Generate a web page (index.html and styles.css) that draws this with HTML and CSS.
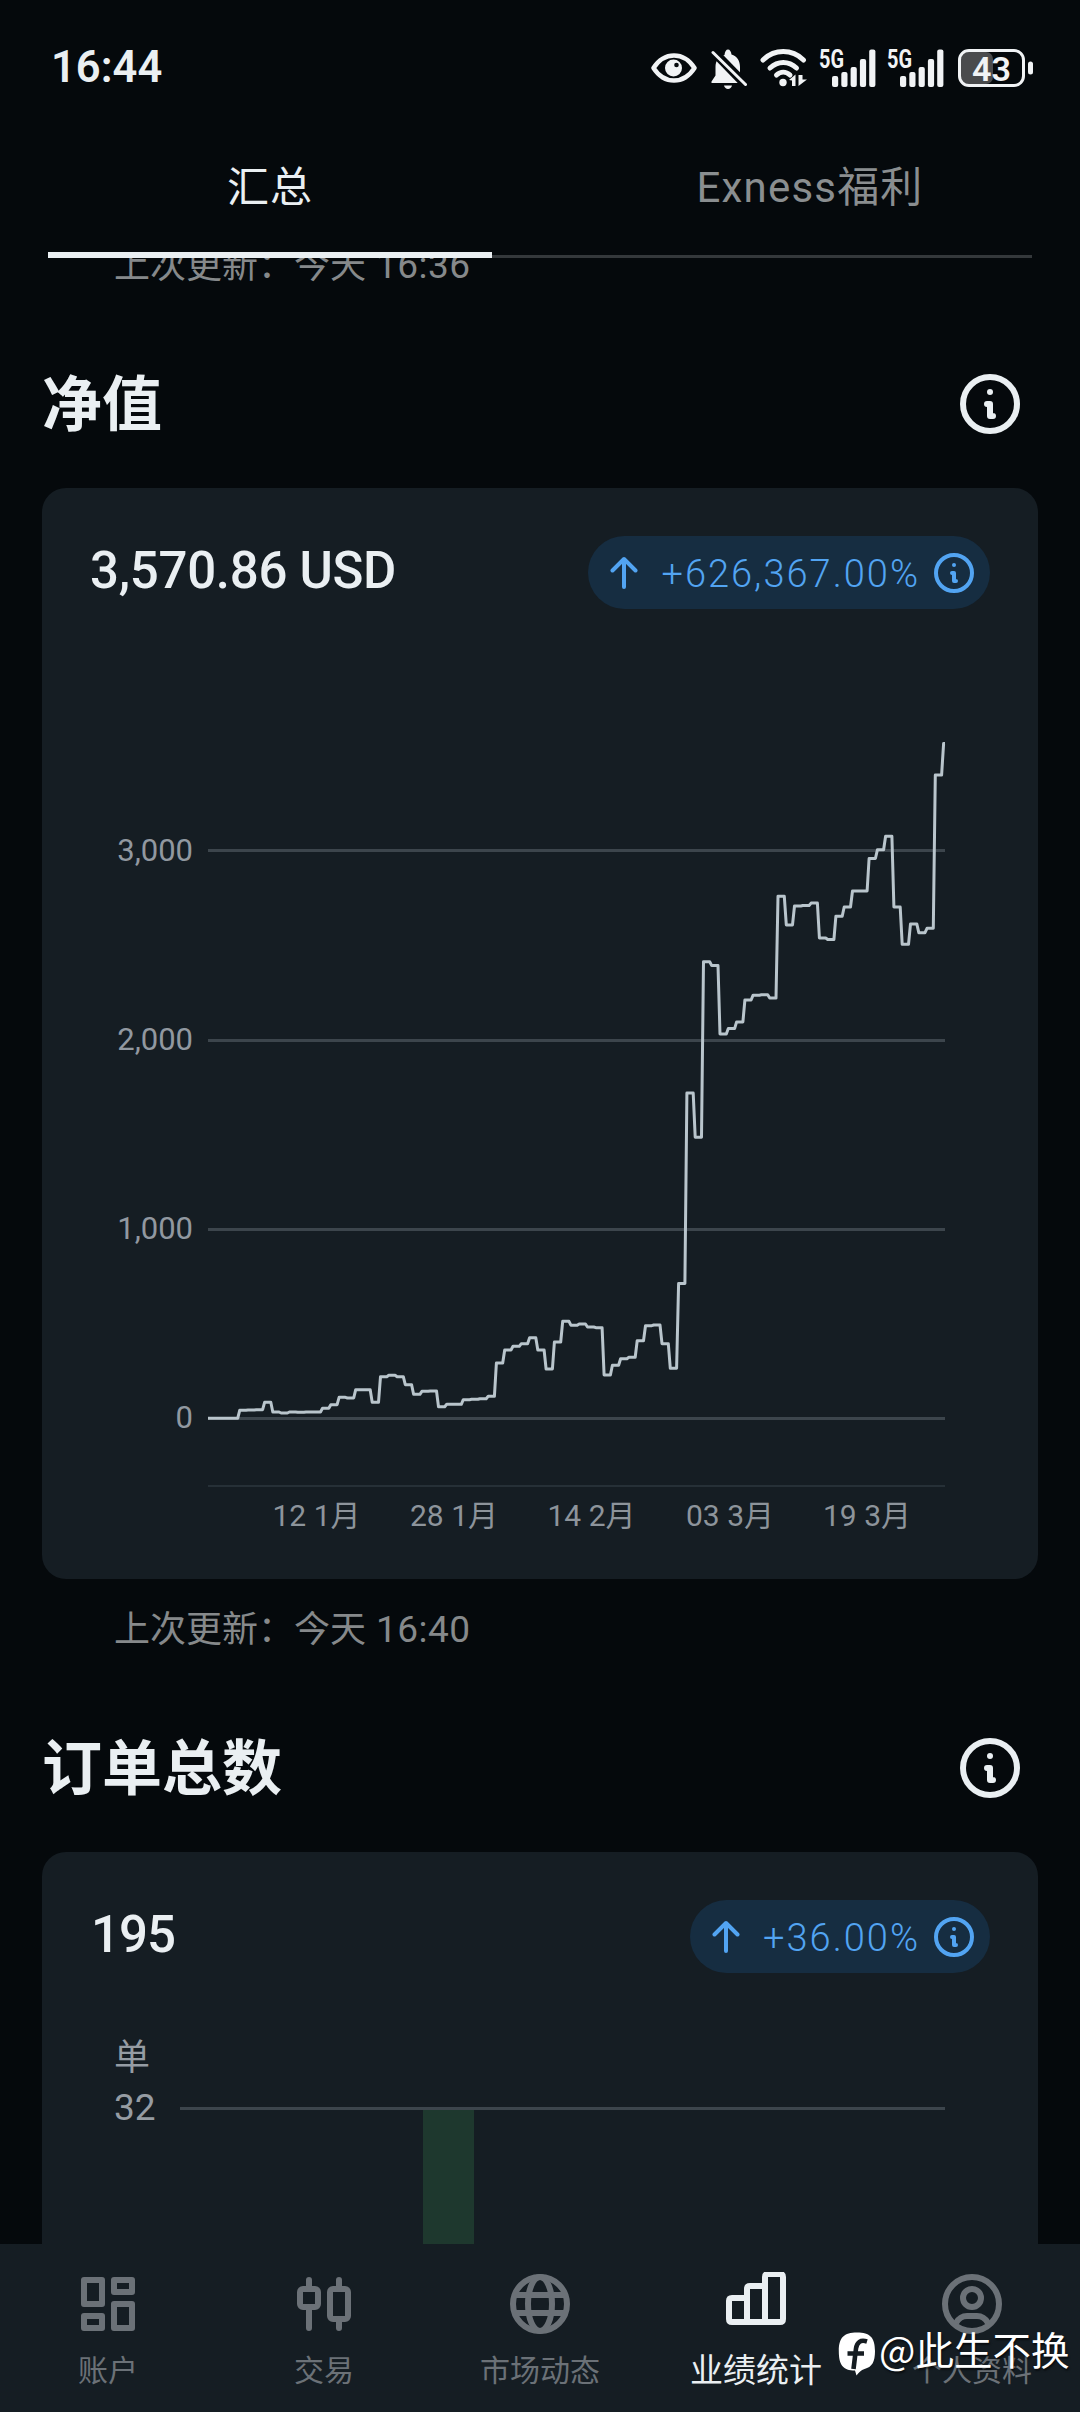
FILE: index.html
```html
<!DOCTYPE html>
<html lang="zh-CN">
<head>
<meta charset="utf-8">
<title>业绩统计</title>
<link rel="stylesheet" href="styles.css">
</head>
<body>
<svg class="defs" width="0" height="0">
  <symbol id="info" viewBox="0 0 60 60">
    <circle cx="30" cy="30" r="27" fill="none" stroke="currentColor" stroke-width="6"/>
    <circle cx="30" cy="18" r="3" fill="currentColor"/>
    <path d="M27 30h3v12h3" fill="none" stroke="currentColor" stroke-width="6" stroke-linecap="round" stroke-linejoin="round"/>
  </symbol>
  <symbol id="arrow" viewBox="0 0 28 34">
    <path d="M14 31V3M2.500 14.500L14 3l11.500 11.500" fill="none" stroke="currentColor" stroke-width="4" stroke-linecap="round" stroke-linejoin="round"/>
  </symbol>
  <symbol id="bars" viewBox="0 0 57 38">
    <g fill="currentColor">
      <rect x="13" y="27" width="6.200" height="11" rx="2"/>
      <rect x="22.300" y="23" width="6.200" height="15" rx="2"/>
      <rect x="31.600" y="18" width="6.200" height="20" rx="2"/>
      <rect x="40.900" y="10" width="6.200" height="28" rx="2"/>
      <rect x="50.200" y="0.500" width="6.200" height="37.500" rx="2"/>
    </g>
  </symbol>
</svg>

<header class="header">
  <div class="status">
    <span class="time">16:44</span>
    <div class="status-icons">
      <svg class="eye" width="46" height="30" viewBox="0 0 46 30">
        <path d="M2.500 15C8 6.500 15 2.500 23 2.500S38 6.500 43.500 15C38 23.500 31 27.500 23 27.500S8 23.500 2.500 15z" fill="none" stroke="currentColor" stroke-width="4.500" stroke-linejoin="round"/>
        <circle cx="22.500" cy="15" r="8.500" fill="currentColor"/><circle cx="25.500" cy="12" r="2.300" fill="#05090c"/>
      </svg>
      <svg class="bell" width="36" height="41" viewBox="0 0 36 41">
        <path d="M0.500 34v-1.500l4-6V18c0-6.500 3.500-10.500 9-12C13.800 2.500 15.200 0.500 17 0.500s3.200 2 3.500 5c5.500 1.500 8.500 6.500 8.500 12.500v8L32 32.500V34z" fill="currentColor"/>
        <path d="M13 36.500h8c-.6 2.300-2 3.500-4 3.500s-3.400-1.200-4-3.500z" fill="currentColor"/>
        <path d="M0 0l36 37" stroke="#05090c" stroke-width="9"/>
        <path d="M2 3.500l32.500 32" stroke="currentColor" stroke-width="3" stroke-linecap="round"/>
      </svg>
      <svg class="wifi" width="48" height="38" viewBox="0 0 48 38">
        <g fill="none" stroke="currentColor" stroke-width="5" stroke-linecap="round">
          <path d="M3 11C14.500-.2 32-.2 43.500 11"/><path d="M10 19c8-7.500 18.500-7.500 26.500 0"/><path d="M16.500 26c4-3.800 9.500-3.800 13.500 0"/>
        </g>
        <circle cx="23" cy="33.500" r="3.700" fill="currentColor"/>
        <path d="M29 31l6.500-5.500V37h-3.500v-5.500zM38.500 26v11l8.500-6.500h-4.500v-4.500z" fill="currentColor"/>
      </svg>
      <svg class="signal" width="57" height="38"><use href="#bars"/><text x="0" y="19" textLength="25" lengthAdjust="spacingAndGlyphs" class="net">5G</text></svg>
      <svg class="signal" width="57" height="38"><use href="#bars"/><text x="0" y="19" textLength="25" lengthAdjust="spacingAndGlyphs" class="net">5G</text></svg>
      <svg class="battery" width="76" height="38" viewBox="0 0 76 38">
        <rect x="3" y="3" width="32" height="32" rx="7" fill="#4a4b4d"/>
        <rect x="1.500" y="1.500" width="64" height="35" rx="9.500" fill="none" stroke="currentColor" stroke-width="3"/>
        <rect x="70" y="12.500" width="5" height="13" rx="2.500" fill="currentColor"/>
        <text x="14" y="31.500" textLength="39" lengthAdjust="spacingAndGlyphs" class="charge">43</text>
      </svg>
    </div>
  </div>
  <nav class="tabs">
    <a class="tab tab-active">汇总</a>
    <a class="tab">Exness福利</a>
  </nav>
</header>

<main class="content">
  <p class="updated updated-first">上次更新：今天 <span class="clock">16:36</span></p>

  <section class="block">
    <div class="heading"><h2>净值</h2><svg class="info-lg"><use href="#info"/></svg></div>
    <div class="card card-equity">
      <div class="summary">
        <strong class="value">3,570.86 USD</strong>
        <span class="pill"><svg class="arrow"><use href="#arrow"/></svg><span class="pct">+626,367.00%</span><svg class="info-sm"><use href="#info"/></svg></span>
      </div>
      <svg class="chart" width="996" height="879" viewBox="42 700 996 879">
        <g class="grid">
          <path d="M208 850.500H945M208 1040.500H945M208 1229.500H945M208 1418.500H945"/>
          <path class="axis" d="M208 1486H945"/>
        </g>
        <g class="ylabel">
          <text x="193" y="861">3,000</text><text x="193" y="1050">2,000</text>
          <text x="193" y="1239">1,000</text><text x="193" y="1428">0</text>
        </g>
        <g class="xlabel">
          <text x="316.500" y="1526">12 1月</text><text x="454" y="1526">28 1月</text><text x="591.500" y="1526">14 2月</text>
          <text x="730" y="1526">03 3月</text><text x="867" y="1526">19 3月</text>
        </g>
        <path id="equity" class="line"/>
      </svg>
    </div>
    <p class="updated">上次更新：今天 <span class="clock">16:40</span></p>
  </section>

  <section class="block">
    <div class="heading"><h2>订单总数</h2><svg class="info-lg"><use href="#info"/></svg></div>
    <div class="card card-orders">
      <div class="summary">
        <strong class="value value-count">195</strong>
        <span class="pill"><svg class="arrow"><use href="#arrow"/></svg><span class="pct">+36.00%</span><svg class="info-sm"><use href="#info"/></svg></span>
      </div>
      <svg class="chart" width="996" height="240" viewBox="42 2012 996 240">
        <rect x="423" y="2109" width="51" height="143" fill="#1e382e"/>
        <path class="gridline" d="M180 2108.500H945"/>
        <g class="unit"><text x="114" y="2069.500">单</text><text x="114" y="2120" class="max">32</text></g>
      </svg>
    </div>
  </section>
</main>

<nav class="bottom">
  <a class="item">
    <svg width="64" height="64" viewBox="0 0 64 64"><g fill="none" stroke="currentColor" stroke-width="6" stroke-linejoin="round"><path d="M8 8h18v24H8zM38 8h18v12H38zM8 44h18v12H8zM38 32h18v24H38z"/></g></svg>
    <span>账户</span>
  </a>
  <a class="item">
    <svg width="64" height="64" viewBox="0 0 64 64"><g fill="none" stroke="currentColor" stroke-width="6" stroke-linecap="round"><rect x="8" y="17" width="18" height="18" rx="3"/><rect x="38" y="17" width="18" height="30" rx="3"/><path d="M17 8v8M17 36v20M47 8v8M47 48v8"/></g></svg>
    <span>交易</span>
  </a>
  <a class="item">
    <svg width="64" height="64" viewBox="0 0 64 64"><g fill="none" stroke="currentColor" stroke-width="6"><circle cx="32" cy="32" r="27"/><ellipse cx="32" cy="32" rx="12" ry="27"/><path d="M7 23h50M7 41h50"/></g></svg>
    <span>市场动态</span>
  </a>
  <a class="item item-active">
    <svg width="64" height="64" viewBox="0 0 64 64"><path d="M5 47V29q0-3 3-3h15v-9q0-3 3-3h15V5q0-3 3-3h12q3 0 3 3v42q0 3-3 3H8q-3 0-3-3zM23 26v24M41 14v36" fill="none" stroke="currentColor" stroke-width="6"/></svg>
    <span>业绩统计</span>
  </a>
  <a class="item">
    <svg width="64" height="64" viewBox="0 0 64 64"><g fill="none" stroke="currentColor" stroke-width="6"><circle cx="32" cy="32" r="27"/><circle cx="32" cy="26" r="9"/><path d="M16 51q4-7 11-7h10q7 0 11 7"/></g></svg>
    <span>个人资料</span>
  </a>
</nav>

<div class="watermark">
  <svg width="38" height="44" viewBox="0 0 38 44">
    <path d="M19 0.500C32 .5 37 5.500 37 19c0 11-3 16-10.500 18-3.500 1-5.500 3.500-8 6.500l-1.500-5C5 38.500.8 33 .8 19 .8 5.500 6 .5 19 .5z" fill="#fff"/>
    <path d="M29 9.500c-6.500-2-10 .5-11 7L15.500 37M9.500 21.500H26" fill="none" stroke="#151c21" stroke-width="4.600"/>
  </svg>
  <span>@此生不换</span>
</div>
<script src="chart.js"></script>
</body>
</html>
```
FILE: styles.css
```css
* { box-sizing: border-box; }
body {
  margin: 0;
  width: 1080px;
  height: 2412px;
  overflow: hidden;
  position: relative;
  display: flex;
  flex-direction: column;
  background: #05090c;
  color: #eaeff2;
  font-family: Roboto, "Noto Sans CJK SC", sans-serif;
}
.defs { position: absolute; }

.header { height: 258px; flex: none; }
.status {
  height: 136px;
  padding: 0 46px 0 51px;
  display: flex;
  align-items: center;
  justify-content: space-between;
}
.time { font-size: 43.500px; font-weight: 600; line-height: 50px; }
.status-icons { display: flex; align-items: center; color: #f1f3f5; }
.bell { margin: 2px 0 0 14px; }
.wifi { margin-left: 13px; }
.signal { margin-left: 11px; overflow: visible; }
.battery { margin-left: 14px; }
.net { font-size: 25px; font-weight: 700; fill: currentColor; }
.charge { font-size: 34px; font-weight: 600; fill: #f1f3f5; }

.tabs {
  height: 122px;
  margin: 0 48px;
  display: flex;
  box-shadow: inset 0 -3px #34383b;
}
.tab {
  width: 444px;
  flex: none;
  text-align: center;
  font-size: 42px;
  line-height: 60px;
  padding-top: 22px;
  letter-spacing: 1px;
}
.tab-active { border-bottom: 6px solid #eaeff2; }
.tab:not(.tab-active) { flex: 1; color: #8a8e90; padding-left: 96px; letter-spacing: 1.200px; }

.content { height: 1986px; flex: none; overflow: hidden; padding: 0 42px; }
.updated {
  margin: 26px 0 0 72px;
  font-size: 36px;
  line-height: 50px;
  color: #86898b;
}
.updated-first { margin-top: -17px; }
.clock { font-size: 37px; letter-spacing: .5px; margin-left: 1px; }
.heading {
  height: 60px;
  margin: 83px 18px 54px 0;
  display: flex;
  align-items: center;
  justify-content: space-between;
}
h2 { margin: 0; padding-top: 3px; font-size: 60px; line-height: 63px; font-weight: 700; }
.info-lg { width: 60px; height: 60px; }

.card { background: #151d23; border-radius: 24px; overflow: hidden; }
.card-equity { height: 1091px; }
.card-orders { height: 420px; }
.summary {
  height: 73px;
  margin: 48px 48px 0;
  display: flex;
  justify-content: space-between;
}
.value { font-size: 51px; font-weight: 500; line-height: 69px; letter-spacing: -.3px; }
.value-count { padding-left: 1px; letter-spacing: -1px; }
.pill {
  height: 73px;
  padding: 0 16px 0 22px;
  border-radius: 37px;
  background: #162d41;
  color: #52a4f2;
  display: flex;
  align-items: center;
}
.arrow { width: 28px; height: 34px; }
.pct { margin: 2px 14px 0 23px; font-size: 38px; letter-spacing: 2px; font-weight: 300; }
.info-sm { width: 40px; height: 40px; }

.chart { display: block; margin-top: 91px; }
.card-orders .chart { margin-top: 39px; }
.grid path, .gridline { stroke: #3c454c; stroke-width: 3; fill: none; }
.grid .axis { stroke: #263037; stroke-width: 2; }
.line { fill: none; stroke: #b9c5cc; stroke-width: 3; stroke-linejoin: round; }
.ylabel text { text-anchor: end; font-size: 31px; fill: #9198a0; }
.xlabel text { text-anchor: middle; font-size: 30px; fill: #8d949b; }
.unit text { font-size: 36px; fill: #959ca3; }
.unit .max { font-size: 37px; }

.bottom { height: 168px; flex: none; display: flex; background: #151d23; color: #6b7177; }
.item {
  width: 216px;
  padding-top: 28px;
  display: flex;
  flex-direction: column;
  align-items: center;
  font-size: 30px;
}
.item span { margin-top: 15px; line-height: 40px; white-space: nowrap; }
.item-active { color: #eaeff2; font-size: 33px; }

.watermark {
  position: absolute;
  left: 838px;
  top: 2324px;
  height: 60px;
  display: flex;
  align-items: center;
  gap: 3px;
  color: #fff;
  font-family: "Noto Sans CJK SC", sans-serif;
  font-size: 38.500px;
  line-height: 52px;
  text-shadow: 1px 2px 2px rgba(0, 0, 0, .6);
}
.watermark span { margin-top: -12px; }
```
FILE: chart.js
```js
// Daily equity levels, as heights within the chart area.
const levels = [
  718.3,718.3,718.3,718.3,710.3,710,709.7,702.3,712,713,712,712.3,712,712,708.3,704.7,697.3,698,689.7,689.7,
  702.3,676.7,675.3,676.7,684.7,694.3,691.3,691,706.7,704.3,704.3,699.7,699.3,698.7,696.3,663,650,646.3,643.7,637.7,
  650,669,642,621.3,625.3,624,627,627.7,675,665.3,658.7,657.3,640.7,625.7,625,643.7,668.3,583.6,393.1,437.2,
  261.8,265.6,334,328.6,321.9,300,295.2,294.7,298.1,196.3,224.9,206,205.5,203.1,238,239.5,216.2,207,191,191,
  158.5,149.8,136.2,207,244.3,223.9,232.7,228.3,75.1,43.6
];
const left = 208, top0 = 700, step = 737 / 89;
let d = `M${left} ${top0 + levels[0]}`;
for (let i = 1; i < levels.length; i++) {
  const x = left + i * step - 1;
  d += `L${(x - 2.4).toFixed(1)} ${top0 + levels[i - 1]}L${(x - 0.4).toFixed(1)} ${top0 + levels[i]}`;
}
d += 'H945';
document.getElementById('equity').setAttribute('d', d);
```
